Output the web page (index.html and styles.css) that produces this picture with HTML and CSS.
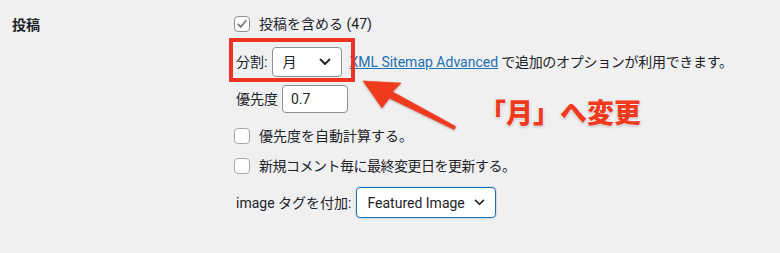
FILE: index.html
```html
<!DOCTYPE html>
<html lang="ja">
<head>
    <meta charset="UTF-8">
    <meta name="viewport" content="width=device-width, initial-scale=1.0">
    <title>投稿の設定</title>
    <link rel="stylesheet" href="styles.css">
</head>
<body>
    <div class="page">
        <div class="form-row">
            <div class="row-label">投稿</div>
            <div class="row-fields">
                <label class="line line-include">
                    <span class="check checked">
                        <svg width="12" height="12" viewBox="0 0 12 12"><path d="M2.2 6.4 L4.8 9 L9.8 2.8" fill="none" stroke="#787c82" stroke-width="1.8" stroke-linecap="round" stroke-linejoin="round"/></svg>
                    </span>
                    <span class="line-text">投稿を含める (47)</span>
                </label>
                <div class="line line-split">
                    <span class="field-name">分割:</span>
                    <div class="select select-month">
                        <span>月</span>
                        <svg class="chevron" width="12" height="8" viewBox="0 0 12 8"><path d="M1.5 1.5 L6 6 L10.5 1.5" fill="none" stroke="#1d2327" stroke-width="1.8" stroke-linecap="round" stroke-linejoin="round"/></svg>
                    </div>
                    <span class="note"><a href="#">XML Sitemap Advanced</a> で追加のオプションが利用できます。</span>
                </div>
                <div class="line line-priority">
                    <span class="field-name">優先度</span>
                    <input class="text-input" type="text" value="0.7">
                </div>
                <label class="line line-auto">
                    <span class="check"></span>
                    <span class="line-text">優先度を自動計算する。</span>
                </label>
                <label class="line line-comment">
                    <span class="check"></span>
                    <span class="line-text">新規コメント毎に最終変更日を更新する。</span>
                </label>
                <div class="line line-image">
                    <span class="field-name">image タグを付加:</span>
                    <div class="select select-image">
                        <span>Featured Image</span>
                        <svg class="chevron" width="11" height="7" viewBox="0 0 12 8"><path d="M1.5 1.5 L6 6 L10.5 1.5" fill="none" stroke="#1d2327" stroke-width="1.9" stroke-linecap="round" stroke-linejoin="round"/></svg>
                    </div>
                </div>
            </div>
        </div>

        <!-- annotations drawn over the screenshot -->
        <div class="mark-box"></div>
        <svg class="mark-arrow" width="780" height="253" viewBox="0 0 780 253">
            <polygon points="363,81 401,83 392.6,91.8 455.8,126.4 454.2,129.6 389.4,98.2 382,108" fill="#f03a1e" stroke="#f03a1e" stroke-width="0.6" stroke-linejoin="round"/>
        </svg>
        <div class="mark-text">「月」へ変更</div>
    </div>
</body>
</html>
```

FILE: styles.css
```css
body {
    margin: 0;
    background: #f0f0f1;
    color: #1d2327;
    font-family: 'Roboto', 'Noto Sans CJK JP', sans-serif;
    font-size: 14px;
}
.page {
    position: relative;
    width: 780px;
    height: 253px;
    overflow: hidden;
}
.form-row {
    display: flex;
}
.row-label {
    width: 222px;
    padding: 14px 0 0 12px;
    font-weight: 700;
    line-height: 20px;
    font-family: 'Noto Sans CJK JP', sans-serif;
}
.row-fields {
    display: flex;
    flex-direction: column;
    padding-top: 14px;
}
.line {
    display: flex;
    align-items: center;
    line-height: 20px;
}
.line-split {
    margin-top: 13px;
    height: 30px;
    padding-left: 2px;
}
.line-priority {
    margin-top: 8px;
    height: 28px;
    padding-left: 2px;
}
.line-auto {
    margin-top: 13px;
}
.line-comment {
    margin-top: 10px;
}
.line-comment .line-text {
    letter-spacing: -0.5px;
}
.line-image {
    margin-top: 11px;
    height: 31px;
    padding-left: 2px;
}
.check {
    width: 16px;
    height: 16px;
    box-sizing: border-box;
    border: 1px solid #a7aaad;
    border-radius: 4px;
    background: #fff;
    display: flex;
    align-items: center;
    justify-content: center;
    margin-right: 9px;
}
.check.checked {
    border-color: #8c8f94;
}
.field-name {
    margin-right: 5px;
}
.select {
    display: flex;
    align-items: center;
    justify-content: space-between;
    box-sizing: border-box;
    height: 100%;
    background: #fff;
    border: 1px solid #8c8f94;
    border-radius: 4px;
}
.select-month {
    width: 70px;
    padding: 0 10px 0 9px;
}
.select-image {
    width: 140px;
    padding: 0 10px 0 10px;
    border-color: #2271b1;
    box-shadow: 0 0 0 1px rgba(34, 113, 177, 0.15);
}
.note {
    margin-left: 7px;
    letter-spacing: -0.3px;
}
.note a {
    color: #2271b1;
    text-decoration: underline;
    letter-spacing: 0;
}
.text-input {
    box-sizing: border-box;
    width: 66px;
    height: 28px;
    margin: 0 0 0 -1px;
    padding: 0 8px;
    border: 1px solid #8c8f94;
    border-radius: 4px;
    background: #fff;
    color: #1d2327;
    font: inherit;
}
.mark-box {
    position: absolute;
    left: 229px;
    top: 38px;
    width: 126px;
    height: 44px;
    box-sizing: border-box;
    border: 4px solid #ee3322;
}
.mark-arrow {
    position: absolute;
    left: 0;
    top: 0;
    filter: drop-shadow(0 1px 1px rgba(0, 0, 0, 0.25));
}
.mark-text {
    position: absolute;
    left: 479px;
    top: 98px;
    font-family: 'Noto Sans CJK JP', sans-serif;
    font-size: 27px;
    font-weight: 900;
    line-height: 1;
    color: #f03a1e;
    text-shadow: 0 0 2px #fff, 0 0 2px #fff, 0 1px 3px rgba(0, 0, 0, 0.35);
}
```
